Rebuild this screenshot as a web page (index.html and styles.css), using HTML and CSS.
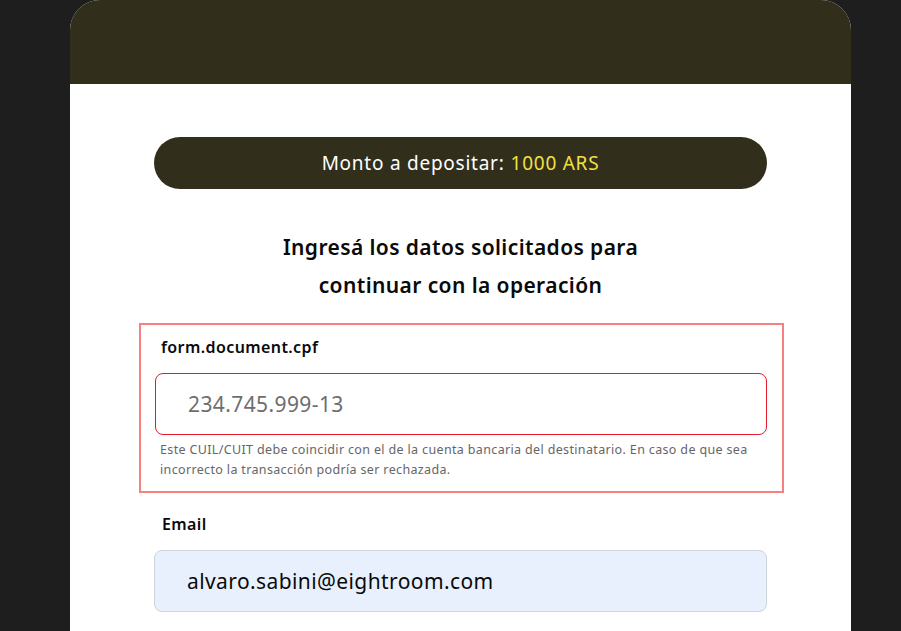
FILE: index.html
```html
<!DOCTYPE html>
<html lang="es">
<head>
<meta charset="utf-8">
<title>Depósito</title>
<link rel="stylesheet" href="styles.css">
</head>
<body>
<div class="card">
  <header class="card-header"></header>
  <main class="card-body">
    <div class="amount-pill">Monto a depositar: <span class="amount">1000 ARS</span></div>
    <h1 class="title">Ingresá los datos solicitados para<br>continuar con la operación</h1>
    <div class="field field-error">
      <label class="field-label" for="doc">form.document.cpf</label>
      <input class="field-input input-error" id="doc" type="text" placeholder="234.745.999-13">
      <p class="field-help">Este CUIL/CUIT debe coincidir con el de la cuenta bancaria del destinatario. En caso de que sea incorrecto la transacción podría ser rechazada.</p>
    </div>
    <div class="field">
      <label class="field-label" for="email">Email</label>
      <input class="field-input input-filled" id="email" type="email" value="alvaro.sabini@eightroom.com">
    </div>
  </main>
</div>
</body>
</html>
```
FILE: styles.css
```css
html, body {
  margin: 0;
  padding: 0;
  background: #1e1e1e;
  height: 100%;
  overflow: hidden;
}
body {
  font-family: "Noto Sans", "Open Sans", sans-serif;
  color: #111;
}
.card {
  box-sizing: border-box;
  margin-left: 70px;
  width: 781px;
  height: 100vh;
  background: #ffffff;
  border-radius: 30px 30px 0 0;
  overflow: hidden;
}
.card-header {
  height: 84px;
  background: #322e1c;
}
.card-body {
  padding: 53px 84px 0 84px;
}
.amount-pill {
  height: 52px;
  border-radius: 26px;
  background: #322e1c;
  color: #ffffff;
  font-size: 19px;
  letter-spacing: 0.75px;
  display: flex;
  align-items: center;
  justify-content: center;
}
.amount {
  color: #f3e03c;
  margin-left: 6px;
}
.title {
  margin: 39px 0 19px 0;
  text-align: center;
  font-size: 21px;
  font-weight: 600;
  letter-spacing: 0.4px;
  line-height: 38px;
  color: #0a0a0a;
}
.field {
  display: flex;
  flex-direction: column;
}
.field-error {
  margin: 0 -17px 21px -15px;
  padding: 12px 15px 11px 14px;
  border: 2px solid #f78080;
}
.field-label {
  font-size: 16px;
  font-weight: 600;
  letter-spacing: 0.4px;
  line-height: 20px;
  padding-left: 6px;
  margin-bottom: 16px;
  color: #0a0a0a;
}
.field:not(.field-error) .field-label {
  padding-left: 8px;
}
.field-input {
  box-sizing: border-box;
  height: 62px;
  width: 100%;
  padding: 0 32px;
  font-family: inherit;
  font-size: 21px;
  letter-spacing: 0.4px;
  border-radius: 8px;
  outline: none;
}
.input-error {
  border: 1px solid #e61b2b;
  background: #ffffff;
}
.input-error::placeholder {
  color: #6e6e6e;
}
.input-filled {
  border: 1px solid #cfd3da;
  background: #e8f0fe;
  color: #0a0a0a;
}
.field-help {
  margin: 5px 0 0 5px;
  font-size: 12.5px;
  letter-spacing: 0.35px;
  line-height: 20px;
  color: #666666;
}
```
